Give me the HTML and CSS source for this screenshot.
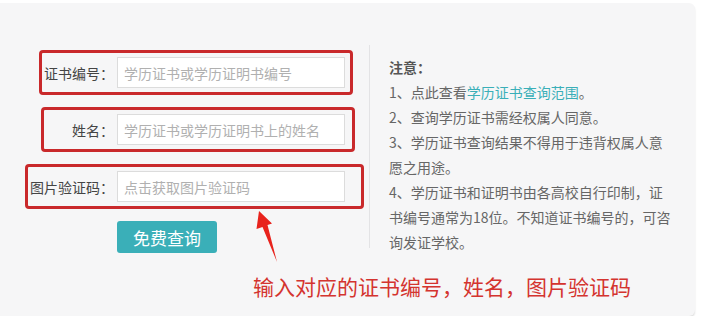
FILE: index.html
```html
<!DOCTYPE html>
<html lang="zh-CN">
<head>
<meta charset="UTF-8" />
<meta name="viewport" content="width=device-width,initial-scale=1" />
<title>学历证书查询</title>
<link rel="stylesheet" href="styles.css">
</head>
<body>
<div class="panel">
  <div class="main">
    <form class="query-form">
      <div class="row row-code">
        <label class="label" for="certNo">证书编号：</label>
        <input type="text" id="certNo" placeholder="学历证书或学历证明书编号" />
      </div>
      <div class="row row-name">
        <label class="label" for="name">姓名：</label>
        <input type="text" id="name" placeholder="学历证书或学历证明书上的姓名" />
      </div>
      <div class="row row-captcha">
        <label class="label" for="captcha">图片验证码：</label>
        <input type="text" id="captcha" placeholder="点击获取图片验证码" />
      </div>
      <button type="button" class="btn">免费查询</button>
    </form>
    <div class="divider"></div>
    <div class="notes">
      <div class="notes-title">注意：</div>
      <p>1、点此查看<a href="#">学历证书查询范围</a>。</p>
      <p>2、查询学历证书需经权属人同意。</p>
      <p>3、学历证书查询结果不得用于违背权属人意愿之用途。</p>
      <p>4、学历证书和证明书由各高校自行印制，证书编号通常为18位。不知道证书编号的，可咨询发证学校。</p>
    </div>
  </div>
  <div class="callout">输入对应的证书编号，姓名，图片验证码</div>
  <!-- 红色箭头标注 -->
  <svg class="arrow" width="35" height="62" viewBox="0 0 35 62">
    <polygon points="9,6 22,18.5 17.5,20 27,57 12.5,22 6.5,24" fill="#e8231d" />
  </svg>
</div>
</body>
</html>
```

FILE: styles.css
```css
* {
  box-sizing: border-box;
}
body {
  margin: 0;
  background: #fff;
  font-family: "Noto Sans CJK SC", "Microsoft YaHei", sans-serif;
  font-size: 14px;
  color: #444;
}
.panel {
  position: relative;
  margin-top: 3px;
  width: 695px;
  height: 313px;
  background: #f6f6f7;
  border-radius: 0 6px 6px 0;
  box-shadow: 0 2px 2px rgba(0,0,0,0.13);
}
.main {
  display: flex;
  align-items: flex-start;
  padding-top: 42px;
}
.query-form {
  width: 369px;
  padding-top: 5px;
}
.row {
  display: flex;
  align-items: center;
  height: 45px;
  margin-bottom: 12px;
  padding: 4px 5px 4px 0;
  border: 3px solid #c9292b;
  border-radius: 4px;
}
.label {
  text-align: right;
  padding-right: 3px;
  line-height: 20px;
  white-space: nowrap;
}
.row-code {
  margin-left: 39px;
  width: 314px;
}
.row-code .label {
  width: 75px;
}
.row-name {
  margin-left: 41px;
  width: 314px;
}
.row-name .label {
  width: 73px;
}
.row-captcha {
  margin-left: 25px;
  width: 339px;
  padding-right: 16px;
}
.row-captcha .label {
  width: 89px;
}
input[type="text"] {
  width: 228px;
  height: 31px;
  padding: 0 6px;
  border: 1px solid #dcdcdc;
  background: #fff;
  font: inherit;
  font-size: 14px;
  color: #333;
}
input[type="text"]::placeholder {
  color: #b0b0b0;
}
.btn {
  display: block;
  margin: 3px 0 0 117px;
  width: 100px;
  height: 32px;
  border: none;
  border-radius: 3px;
  background: #3aafb8;
  color: #fff;
  font: inherit;
  font-size: 17px;
  cursor: pointer;
}
.divider {
  width: 1px;
  height: 203px;
  background: #e3e3e5;
}
.notes {
  width: 300px;
  padding: 10px 0 0 19px;
  line-height: 25px;
  color: #666;
}
.notes-title {
  font-weight: 700;
  color: #555;
}
.notes p {
  margin: 0;
  width: 282px;
}
.notes a {
  color: #3aafb8;
  text-decoration: none;
}
.callout {
  margin: 18px 0 0 253px;
  font-size: 21px;
  line-height: 26px;
  color: #d4342f;
  white-space: nowrap;
}
.arrow {
  position: absolute;
  left: 250px;
  top: 202px;
}
```
